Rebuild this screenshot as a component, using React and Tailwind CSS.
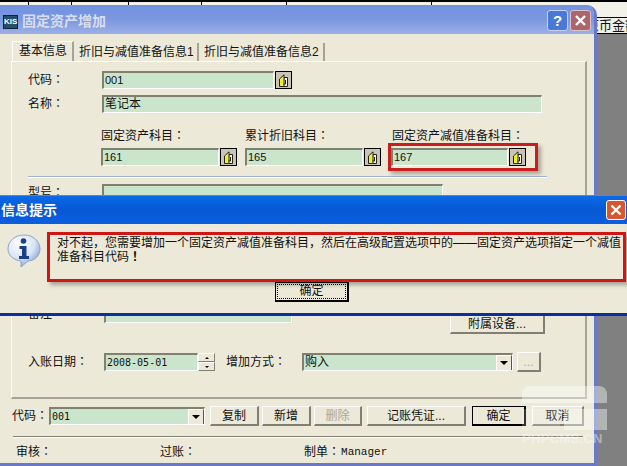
import React from 'react';

const CJK = '[font-family:"Liberation_Sans","Noto_Sans_CJK_SC",sans-serif]';

// the TC face centres its full-width punctuation, as the old system font does
const Colon = () => <span className="leading-none [font-family:'Noto_Sans_CJK_TC',sans-serif]">：</span>;

const Field = ({ className = '', children }) => (
  <div className={`h-[18px] bg-[#cbe5cd] border-t-2 border-l-2 border-t-[#80806f] border-l-[#80806f] border-b border-r border-b-white border-r-white pl-px text-[12px] leading-[15px] text-[#111] overflow-hidden whitespace-nowrap ${className}`}>
    {children}
  </div>
);

const Num = ({ children }) => <span className="text-[11px]">{children}</span>;

const LookupBtn = () => (
  <div className="w-[17px] h-[18px] bg-[#c8c5b8] border border-black flex items-center justify-center shrink-0 ml-px">
    <svg width="9" height="13" viewBox="0 0 9 13">
      <path d="M5 3.5 L8.5 3.5 L8.5 12.5 L4 12.5 Z" fill="#f5f4e8" stroke="#222" strokeWidth="1" />
      <path d="M0.5 5 L5 0.8 L5 12.5 L0.5 12.5 Z" fill="#f4ec30" stroke="#222" strokeWidth="1" />
      <path d="M6.5 6 L6.5 10 L4.5 10" fill="none" stroke="#222" strokeWidth="1" />
    </svg>
  </div>
);

const Btn = ({ w, disabled, focused, children }) => (
  <div
    style={{ width: w }}
    className={`h-5 shrink-0 flex items-center justify-center bg-[#ece9d8] text-[12px] border ${focused ? 'border-black border-b-2 border-r-2' : 'border-t-white border-l-white border-b-2 border-r-2 border-b-[#807f74] border-r-[#807f74]'} ${disabled ? 'text-[#a8a79c]' : 'text-[#111]'}`}
  >
    {children}
  </div>
);

const DropArrow = () => (
  <div className="w-[16px] h-[16px] bg-[#ece9d8] border-t border-l border-t-white border-l-white border-b border-r border-b-[#555] border-r-[#555] flex items-center justify-center shrink-0">
    <div className="w-0 h-0 border-l-[4px] border-r-[4px] border-t-[4px] border-l-transparent border-r-transparent border-t-black" />
  </div>
);

const TopTicks = () => (
  <div className="h-[5px] bg-[#f2f1ea] flex border-t-2 border-black">
    {[29, 43, 57, 73, 85, 145].map((w, i) => (
      <div key={i} style={{ width: w }} className="h-[3px] border-r border-black" />
    ))}
  </div>
);

const InfoIcon = () => (
  <svg width="34" height="34" viewBox="0 0 34 34" className="shrink-0">
    <defs>
      <radialGradient id="bub" cx="35%" cy="25%" r="80%">
        <stop offset="0%" stopColor="#ffffff" />
        <stop offset="60%" stopColor="#d7e4f5" />
        <stop offset="100%" stopColor="#7f9fcb" />
      </radialGradient>
    </defs>
    <path d="M17 1 C26 1 33 7 33 15 C33 22 27 27 21 27 L14 33 L14 27 C7 26 1 22 1 15 C1 7 8 1 17 1 Z" fill="url(#bub)" stroke="#8ea6c8" strokeWidth="1" />
    <circle cx="16.5" cy="7" r="2.8" fill="#1b3f86" />
    <path d="M12.5 12 L19.5 12 L19.5 22 L22 22 L22 25 L12 25 L12 22 L15 22 L15 15 L12.5 15 Z" fill="#1b3f86" />
  </svg>
);

export default function App() {
  return (
    <div className={`relative w-[627px] h-[466px] overflow-hidden bg-[#808080] ${CJK}`}>
      <TopTicks />

      {/* ledger table behind the window */}
      <div className="absolute left-[586px] top-[5px] w-[41px] h-[29px] bg-[#f2f1ea]">
        <div className="mt-[12px] h-[17px] border-t border-b border-black text-[13px] leading-[15px] text-[#111] whitespace-nowrap">
          原币金额
        </div>
      </div>

      {/* asset window */}
      <div className="relative w-[597px] h-[461px] flex flex-col bg-[#ece9d8] rounded-tr-[10px] border-r-[3px] border-b-[3px] border-r-[#6a78cc] border-b-[#6a78cc] overflow-hidden">
        <div className="h-[29px] shrink-0 bg-gradient-to-b from-[#7292e2] via-[#7c97df] to-[#9cb0e6] flex items-center pl-[3px] pr-[3px]">
          <div className="w-[15px] h-[14px] bg-[#24506e] border border-[#123] text-white text-[8px] leading-[12px] font-bold text-center mt-[4px]">KIS</div>
          <span className="ml-[4px] text-[14px] font-bold text-[#d6deef] mt-[3px]">固定资产增加</span>
          <div className="ml-auto flex gap-[2px] mt-[1px]">
            <div className="w-[21px] h-[21px] rounded-[3px] bg-[#4a78d8] border border-[#c6d4f2] text-white text-[15px] font-bold leading-[19px] text-center">?</div>
            <div className="w-[21px] h-[21px] rounded-[3px] bg-[#a9666f] border border-[#d9c3c6] flex items-center justify-center">
              <svg width="13" height="13" viewBox="0 0 13 13"><path d="M2 2 L11 11 M11 2 L2 11" stroke="#fff" strokeWidth="2.4" /></svg>
            </div>
          </div>
        </div>

        {/* tabs */}
        <div className="flex items-end h-[27px] shrink-0 pl-[12px] text-[12px] text-[#111]">
          <div className="h-[20px] w-[62px] pl-[6px] border-t border-l border-white border-r-2 border-r-[#a5a397] leading-[19px]">基本信息</div>
          <div className="h-[18px] w-[125px] pl-[5px] border-r-2 border-r-[#a5a397] leading-[19px]">折旧与减值准备信息1</div>
          <div className="h-[18px] w-[126px] pl-[5px] border-r-2 border-r-[#a5a397] leading-[19px]">折旧与减值准备信息2</div>
        </div>

        {/* tab panel */}
        <div className="relative ml-[11px] w-[576px] h-[338px] shrink-0 border-t border-l border-white border-r-2 border-r-[#a5a397] border-b-2 border-b-[#a5a397] text-[12px] text-[#111]">
          <div className="flex items-center mt-[9px] pl-[16px]">
            <span className="w-[74px]">代码<Colon /></span>
            <Field className="w-[172px]"><Num>001</Num></Field>
            <LookupBtn />
          </div>
          <div className="flex items-center mt-[6px] pl-[16px]">
            <span className="w-[74px]">名称<Colon /></span>
            <Field className="w-[440px]">笔记本</Field>
          </div>

          <div className="flex mt-[14px] pl-[89px]">
            <span className="w-[144px]">固定资产科目<Colon /></span>
            <span className="w-[147px]">累计折旧科目<Colon /></span>
            <span>固定资产减值准备科目<Colon /></span>
          </div>
          <div className="flex mt-[3px] pl-[89px]">
            <div className="flex w-[144px]"><Field className="w-[118px]"><Num>161</Num></Field><LookupBtn /></div>
            <div className="flex w-[146px]"><Field className="w-[118px]"><Num>165</Num></Field><LookupBtn /></div>
            <div className="flex"><Field className="w-[117px]"><Num>167</Num></Field><LookupBtn /></div>
          </div>
          <div className="h-0.5 mt-[10px] ml-[16px] w-[519px] bg-[#9fb3d6] border-b border-white" />

          <div className="flex items-center mt-[6px] pl-[16px]">
            <span className="w-[74px]">型号<Colon /></span>
            <Field className="w-[341px]" />
          </div>

          <div className="flex items-start mt-[103px] pl-[16px]">
            <span className="w-[76px]">备注</span>
            <Field className="w-[188px]" />
            <div className="ml-[158px] mt-[9px]"><Btn w={95}>附属设备...</Btn></div>
          </div>

          <div className="flex items-center mt-[18px] pl-[16px]">
            <span className="w-[76px]">入账日期<Colon /></span>
            <Field className="w-[94px] [font-family:'DejaVu_Sans_Mono',monospace] !text-[10px]">2008-05-01</Field>
            <div className="w-[17px] h-[18px] flex flex-col">
              <div className="h-[9px] border-t border-l border-white border-b border-r border-b-[#807f74] border-r-[#807f74] flex items-center justify-center">
                <div className="w-0 h-0 border-l-[2px] border-r-[2px] border-b-[2px] border-l-transparent border-r-transparent border-b-black" />
              </div>
              <div className="h-[9px] border-t border-l border-white border-b border-r border-b-[#807f74] border-r-[#807f74] flex items-center justify-center">
                <div className="w-0 h-0 border-l-[2px] border-r-[2px] border-t-[2px] border-l-transparent border-r-transparent border-t-black" />
              </div>
            </div>
            <span className="ml-[11px] w-[76px]">增加方式<Colon /></span>
            <Field className="w-[211px] flex items-start justify-between !pr-0">
              <span>购入</span>
              <DropArrow />
            </Field>
            <div className="ml-[4px]"><Btn w={24} disabled>...</Btn></div>
          </div>
        </div>

        {/* bottom bar */}
        <div className="flex items-center mt-[7px] pl-[12px] text-[12px] text-[#111]">
          <span className="w-[37px]">代码<Colon /></span>
          <Field className="w-[156px] flex items-start justify-between !pr-0">
            <span className="[font-family:'DejaVu_Sans_Mono',monospace] text-[10px]">001</span>
            <DropArrow />
          </Field>
          <div className="flex gap-[3px] ml-[5px]">
            <Btn w={49}>复制</Btn>
            <Btn w={49}>新增</Btn>
            <Btn w={48} disabled>删除</Btn>
            <div className="ml-[2px]"><Btn w={99}>记账凭证...</Btn></div>
            <div className="ml-[3px]"><Btn w={54} focused>确定</Btn></div>
            <div className="ml-[3px]"><Btn w={52}>取消</Btn></div>
          </div>
        </div>
        <div className="h-0.5 mt-[10px] ml-[13px] w-[570px] bg-[#807f74] border-b border-white" />
        <div className="flex items-center mt-[5px] pl-[16px] text-[12px] text-[#111]">
          <span className="w-[144px]">审核<Colon /></span>
          <span className="w-[144px]">过账<Colon /></span>
          <span>制单<Colon /></span>
          <span className="[font-family:'Liberation_Mono',monospace] text-[11px] ml-px">Manager</span>
        </div>
      </div>

      {/* red mark round the 167 field */}
      <div className="absolute left-[388px] top-[143px] w-[150px] h-[28px] border-[3px] border-[#c81e1e] shadow-[3px_3px_4px_rgba(0,0,0,0.3)]" />

      {/* message box */}
      <div className="absolute left-0 top-[195px] w-[627px] h-[121px] flex flex-col bg-[#ece9d8] border-b-[3px] border-b-[#0a2f9e]">
        <div className="h-[29px] shrink-0 bg-gradient-to-b from-[#0b6ae6] via-[#0758d4] to-[#0a5fe0] border-t border-t-[#3c8cf0] flex items-center pl-px pr-px">
          <span className="text-[14px] font-bold text-white">信息提示</span>
          <div className="ml-auto w-[20px] h-[20px] rounded-[3px] bg-[#d9572f] border border-white flex items-center justify-center">
            <svg width="12" height="12" viewBox="0 0 12 12"><path d="M1.5 1.5 L10.5 10.5 M10.5 1.5 L1.5 10.5" stroke="#fff" strokeWidth="2.4" /></svg>
          </div>
        </div>
        <div className="flex pl-[7px] pt-[10px]">
          <InfoIcon />
          <p className="ml-[16px] w-[568px] text-[12px] leading-[13px] text-[#111] pt-[3px]">
            对不起，您需要增加一个固定资产减值准备科目，然后在高级配置选项中的——固定资产选项指定一个减值准备科目代码<span className="leading-none [font-family:'Noto_Sans_CJK_TC',sans-serif] font-bold">！</span>
          </p>
        </div>
        <div className="absolute left-[275px] top-[87px] w-[74px] h-[20px] border border-black border-r-2 border-b-2 bg-[#ece9d8] p-px">
          <div className="h-full border border-dotted border-black text-[12px] leading-[13px] text-center text-[#111]">确定</div>
        </div>
        <div className="absolute left-[47px] top-[37px] w-[579px] h-[50px] border-[3px] border-[#d01515] shadow-[3px_3px_4px_rgba(0,0,0,0.3)]" />
      </div>

      {/* site watermark */}
      <div className="absolute left-[522px] top-[386px] w-[85px] h-[61px] pointer-events-none">
        <div className="w-full h-[17px] rounded-t-[8px] bg-white/40" />
        <div className="flex gap-[4px] mt-[6px] h-[21px]">
          <div className="w-[38px] bg-white/20" />
          <div className="w-[43px] bg-white/40" />
        </div>
        <div className="text-[13px] leading-[17px] font-bold text-white/40 tracking-[0.3px] whitespace-nowrap">PHPCMS.CN</div>
      </div>
    </div>
  );
}
